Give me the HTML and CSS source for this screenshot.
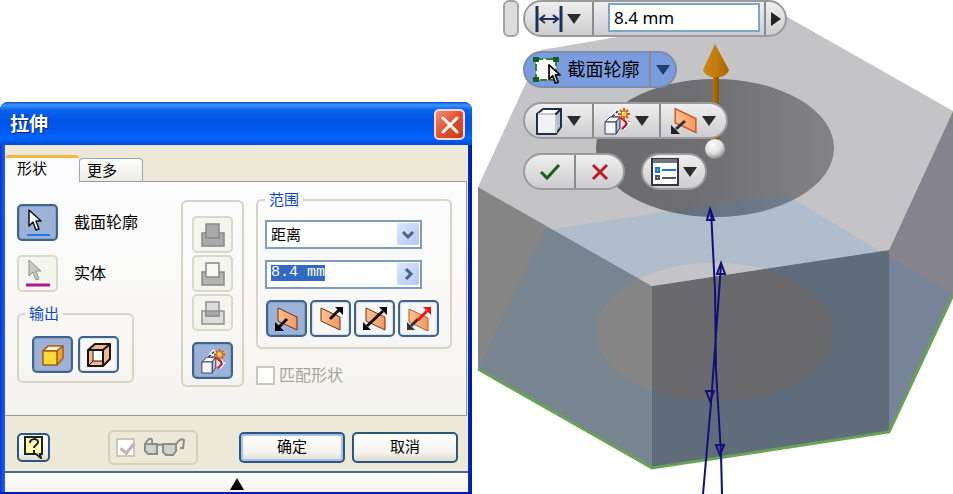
FILE: index.html
```html
<!DOCTYPE html>
<html lang="zh-CN">
<head>
    <meta charset="UTF-8">
    <meta name="viewport" content="width=device-width, initial-scale=1.0">
    <title>拉伸</title>
    <link rel="stylesheet" href="styles.css">
</head>
<body>
    <!-- shared icons -->
    <svg class="defs" width="0" height="0" aria-hidden="true">
        <defs>
            <linearGradient id="shaft" x1="0" x2="1"><stop offset="0" stop-color="#b87000"/><stop offset="1" stop-color="#8c5400"/></linearGradient>
            <linearGradient id="plane-fill" x1="0" x2="1"><stop offset="0" stop-color="#ffc08c"/><stop offset="1" stop-color="#f09a62"/></linearGradient>
            <symbol id="cursor" viewBox="0 0 14 22">
                <path d="M1 1v16l4-4 3 8 3-1-3-8h5z" stroke-linejoin="round"/>
            </symbol>
            <symbol id="plane" viewBox="0 0 24 26">
                <path d="M3 3l19 9v13L3 16z" fill="url(#plane-fill)"/>
            </symbol>
            <symbol id="new-solid" viewBox="0 0 28 28">
                <path d="M9 11l7-8M20 21l6-7" stroke="#fff" stroke-width="5"/>
                <path d="M8 11l7-7M21 20l5-6" stroke="#2b3f9a" stroke-width="2" fill="none" stroke-dasharray="5 2"/>
                <path d="M12 10l6 1 5 4v3l-4 4" fill="#f7dcdc" stroke="#b01830" stroke-width="2"/>
                <path d="M2 15l5-5h10l-4 5z" fill="#fff" stroke="#333a5c"/>
                <path d="M13 15l4-5v11l-4 6z" fill="#b8bcc8" stroke="#333a5c"/>
                <path d="M2 15h11v12H2z" fill="#f4f4f6" stroke="#333a5c"/>
                <path d="M21 1v12M15 7h12M17 3l8 8M25 3l-8 8" stroke="#d85a00" stroke-width="2"/>
                <circle cx="21" cy="7" r="3" fill="#ffd46a" stroke="#e06a00"/>
            </symbol>
        </defs>
    </svg>

    <section class="dialog" aria-label="拉伸">
        <header class="title-bar">
            <h1>拉伸</h1>
            <button type="button" class="close" aria-label="关闭">
                <svg width="18" height="18" viewBox="0 0 18 18"><path d="M2 2l14 14M16 2L2 16" stroke="#fff" stroke-width="3" stroke-linecap="round"/></svg>
            </button>
        </header>

        <div class="dialog-body">
            <div class="tabs" role="tablist">
                <button type="button" role="tab" class="tab active" aria-selected="true">形状</button>
                <button type="button" role="tab" class="tab" aria-selected="false">更多</button>
            </div>

            <div class="panel" role="tabpanel">
                <div class="selection">
                    <div class="field">
                        <button type="button" id="profile" class="tool pressed">
                            <svg width="30" height="30" viewBox="0 0 30 30"><use href="#cursor" x="5" y="1" width="14" height="22" fill="#fff" stroke="#111" stroke-width="1.5"/><path d="M4 27h23" stroke="#1c7fe0" stroke-width="2"/></svg>
                        </button>
                        <label for="profile">截面轮廓</label>
                    </div>
                    <div class="field">
                        <button type="button" id="solid" class="tool disabled">
                            <svg width="30" height="30" viewBox="0 0 30 30"><use href="#cursor" x="5" y="0" width="14" height="22" fill="#c8c8c2" stroke="#909090"/><path d="M3 26h24" stroke="#b01a8c" stroke-width="3"/></svg>
                        </button>
                        <label for="solid">实体</label>
                    </div>
                    <fieldset class="output">
                        <legend>输出</legend>
                        <button type="button" class="tool pressed" aria-label="实体输出">
                            <svg width="26" height="24" viewBox="0 0 26 24" stroke="#a85a10" stroke-width="1.5" stroke-linejoin="round"><path d="M3 8l5-5h15l-6 5z" fill="#fff4d0"/><path d="M17 8l6-5v12l-6 7z" fill="#e8a828"/><path d="M3 8h14v14H3z" fill="#ffd83c"/></svg>
                        </button>
                        <button type="button" class="tool" aria-label="曲面输出">
                            <svg width="26" height="26" viewBox="0 0 26 26" stroke="#1c1410" stroke-width="2" stroke-linejoin="round"><path d="M2 8l7-6h15v15l-7 7H2z" fill="#f0b890"/><path d="M7 8h10v11H7z" fill="#fff" stroke="none"/><path d="M2 8h15v16M17 8l7-6" fill="none"/><path d="M2 24l5-5h10M7 8v11" fill="none" stroke-width="1"/></svg>
                        </button>
                    </fieldset>
                </div>

                <div class="operations">
                    <button type="button" class="tool disabled" aria-label="求并">
                        <svg width="26" height="26" viewBox="0 0 26 26" fill="#aaa" stroke="#888" stroke-width="1.5"><path d="M2 11h22v13H2z"/><path d="M6 2h13v14H6z"/></svg>
                    </button>
                    <button type="button" class="tool disabled" aria-label="求差">
                        <svg width="26" height="26" viewBox="0 0 26 26" fill="#b4b4b4" stroke="#888" stroke-width="1.5"><path d="M2 11h22v13H2z"/><path d="M6 2h13v14H6z" fill="#f8f8f4"/></svg>
                    </button>
                    <button type="button" class="tool disabled" aria-label="求交">
                        <svg width="26" height="26" viewBox="0 0 26 26" fill="#dcdcdc" stroke="#909090" stroke-width="1.5"><path d="M2 11h22v13H2z"/><path d="M6 2h13v14H6z"/><path d="M6 11h13v5H6z" fill="#aaa"/></svg>
                    </button>
                    <button type="button" class="tool pressed" aria-label="新建实体">
                        <svg width="26" height="26"><use href="#new-solid"/></svg>
                    </button>
                </div>

                <div class="settings">
                    <fieldset class="extents">
                        <legend>范围</legend>
                        <div class="combo">
                            <select aria-label="范围"><option>距离</option></select>
                            <svg class="combo-arrow" width="22" height="22" viewBox="0 0 22 22"><path d="M6 9l5 5 5-5" fill="none" stroke="#4d6185" stroke-width="3"/></svg>
                        </div>
                        <div class="combo">
                            <span class="value"><input type="text" class="distance" value="8.4 mm" aria-label="距离"></span>
                            <button type="button" class="combo-arrow" aria-label="更多值"><svg width="22" height="22" viewBox="0 0 22 22"><path d="M9 6l5 5-5 5" fill="none" stroke="#4d6185" stroke-width="3"/></svg></button>
                        </div>
                        <div class="directions">
                            <button type="button" class="tool pressed" aria-label="方向 1">
                                <svg width="26" height="28" viewBox="0 0 26 28"><use href="#plane" x="1" y="0" width="24" height="26" stroke="#6b3010"/><path d="M13 14l-8 8" stroke="#111" stroke-width="3"/><path d="M1 26v-9l9 9z"/></svg>
                            </button>
                            <button type="button" class="tool" aria-label="方向 2">
                                <svg width="26" height="28" viewBox="0 0 26 28"><use href="#plane" x="0" y="0" width="24" height="26" stroke="#6b3010"/><path d="M12 14l9-9" stroke="#111" stroke-width="3"/><path d="M25 2v8l-8-8z"/></svg>
                            </button>
                            <button type="button" class="tool" aria-label="对称">
                                <svg width="26" height="28" viewBox="0 0 26 28"><use href="#plane" x="1" y="0" width="24" height="26" stroke="#6b3010"/><path d="M5 21L21 6" stroke="#111" stroke-width="3"/><path d="M25 2v8l-8-8zM1 25v-8l8 8z"/></svg>
                            </button>
                            <button type="button" class="tool" aria-label="不对称">
                                <svg width="26" height="28" viewBox="0 0 26 28"><use href="#plane" x="0" y="1" width="24" height="26" stroke="#b05a20"/><path d="M5 21l7-7" stroke="#333" stroke-width="3"/><path d="M1 25v-8l8 8z" fill="#333"/><path d="M12 15l9-9" stroke="#f01414" stroke-width="3"/><path d="M25 2v8l-8-8z" fill="#f01414"/></svg>
                            </button>
                        </div>
                    </fieldset>
                    <div class="match">
                        <input type="checkbox" id="match" disabled>
                        <label for="match">匹配形状</label>
                    </div>
                </div>
            </div>

            <footer class="actions">
                <button type="button" class="push help" aria-label="帮助">
                    <svg width="22" height="24" viewBox="0 0 22 24"><path d="M2 2h17v17h-2l1 4-5-4H2z" fill="#ffffa8" stroke="#222" stroke-width="2"/><path d="M7 8c0-5 8-5 8-1 0 3-4 3-4 6M11 15v3" fill="none" stroke="#181850" stroke-width="2"/></svg>
                </button>
                <label class="preview">
                    <input type="checkbox" checked disabled aria-label="预览">
                    <svg width="42" height="20" viewBox="0 0 42 20" fill="#d0d0cc" stroke="#8c8c88" stroke-width="2"><path d="M2 7h12v10H5l-3-3zM20 7h13v7l-3 4h-7l-3-3z"/><path d="M14 9c2-2 4-2 6 0M2 8c1-5 6-8 7-5v3M33 8c2-5 6-7 8-5l-1 8h-3" fill="none"/></svg>
                </label>
                <button type="button" class="push default">确定</button>
                <button type="button" class="push">取消</button>
            </footer>
            <button type="button" class="collapse" aria-label="收起">
                <svg width="14" height="12" viewBox="0 0 14 12"><path d="M7 0l7 12H0z"/></svg>
            </button>
        </div>
    </section>

    <main class="viewport">
        <svg class="scene" viewBox="472 0 481 494" role="img" aria-label="六角螺母">
            <defs>
                <linearGradient id="bore" x1="0" x2="1">
                    <stop offset="0" stop-color="#6c6c6e"/>
                    <stop offset=".4" stop-color="#6e6e70"/>
                    <stop offset="1" stop-color="#838387"/>
                </linearGradient>
                <radialGradient id="ball" cx=".4" cy=".3" r=".7">
                    <stop offset="0" stop-color="#fff"/>
                    <stop offset=".6" stop-color="#e0e0e0"/>
                    <stop offset="1" stop-color="#8c8c8c"/>
                </radialGradient>
                <linearGradient id="cone" x1="0" x2="1">
                    <stop offset="0" stop-color="#d08414"/>
                    <stop offset=".5" stop-color="#c27a0c"/>
                    <stop offset="1" stop-color="#a86604"/>
                </linearGradient>
            </defs>
            <!-- faces -->
            <path d="M478 187l63-137 234-40 178 101-64 139-237 36z" fill="#c4c4c6"/>
            <path d="M478 187l174 99v182l-174-99z" fill="#858585"/>
            <path d="M652 286l237-36v182l-237 36z" fill="#6a6a6c"/>
            <path d="M889 250l64-139v184l-64 137z" fill="#85848c"/>
            <ellipse cx="715" cy="148" rx="119" ry="69" fill="url(#bore)"/>
            <!-- base profile seen through the solid -->
            <path d="M478 369l67-139 240-36 168 101-64 137-237 36zM596 332a118 69 0 0 0 237 0a118 69 0 0 0-237 0z" fill="rgba(0,140,255,.1)" fill-rule="evenodd"/>
            <path d="M478 369l174 99 237-36 64-137" fill="none" stroke="#68a355" stroke-width="3"/>
            <!-- axes -->
            <g fill="none" stroke="#10107c" stroke-width="2">
                <path d="M711 210l4 80 1 80 5 84 1 40M721 265l-5 70-5 68-8 91"/>
                <path d="M710 209l-3 11h7zM721 263l-4 11h8zM710 401l-4-10h8zM720 455l-4-10h8z"/>
            </g>
            <!-- drag handle -->
            <path d="M713 74h6v70h-6z" fill="url(#shaft)"/>
            <path d="M715 44l14 26c-3 10-23 10-26 0z" fill="url(#cone)"/>
            <circle cx="715" cy="149" r="10" fill="url(#ball)"/>
        </svg>

        <div class="mini-toolbar">
            <div class="row first">
                <span class="grip"></span>
                <div class="capsule value-capsule">
                    <button type="button" class="segment" aria-label="距离类型">
                        <svg width="28" height="26" viewBox="0 0 28 26" stroke="#1c3058"><path d="M2 0v26M26 0v26" stroke-width="3"/><path d="M6 13h16M10 9l-5 4 5 4M18 9l5 4-5 4" stroke-width="2" fill="none"/></svg>
                        <span class="caret"></span>
                    </button>
                    <div class="value-slot"><input type="text" value="8.4 mm" aria-label="距离值"></div>
                    <button type="button" class="next" aria-label="展开"><span class="caret-right"></span></button>
                </div>
            </div>
            <div class="row">
                <div class="capsule selected">
                    <button type="button" class="segment profile">
                        <svg width="28" height="28" viewBox="0 0 28 28"><path d="M3 3h20v21H3z" fill="#fff" stroke="#2c8038" stroke-width="2" stroke-dasharray="7 3"/><path d="M0 1h6v5H0zM20 1h6v5h-6zM0 21h6v5H0z" fill="#106020"/><use href="#cursor" x="15" y="8" width="13" height="20" fill="#fff" stroke="#111" stroke-width="2"/></svg>
                        截面轮廓
                    </button>
                    <button type="button" class="drop" aria-label="截面轮廓选项"><span class="caret"></span></button>
                </div>
            </div>
            <div class="row">
                <div class="capsule">
                    <button type="button" class="segment" aria-label="实体">
                        <svg width="28" height="28" viewBox="0 0 28 28" stroke="#20304f" stroke-width="2" stroke-linejoin="round"><path d="M2 7l6-5h18l-5 5z" fill="#fff"/><path d="M21 7l5-5v18l-5 7z" fill="#b8bcc4"/><path d="M2 7h19v20H2z" fill="#f2f2f4"/><path d="M3 7h17M21 8v18" stroke="#c4c8d0"/></svg>
                        <span class="caret"></span>
                    </button>
                    <button type="button" class="segment" aria-label="新建实体">
                        <svg width="28" height="28"><use href="#new-solid"/></svg>
                        <span class="caret"></span>
                    </button>
                    <button type="button" class="segment" aria-label="方向">
                        <svg width="28" height="28" viewBox="0 0 28 28"><use href="#plane" x="2" y="-2" width="26" height="29" stroke="#c8602c" stroke-width="1.5"/><path d="M15 14l-9 8" stroke="#333" stroke-width="3"/><path d="M1 27v-9l9 9z" fill="#222"/></svg>
                        <span class="caret"></span>
                    </button>
                </div>
            </div>
            <div class="row">
                <div class="capsule">
                    <button type="button" class="answer" aria-label="确定">
                        <svg width="22" height="18" viewBox="0 0 22 18"><path d="M2 9l6 6L20 2" fill="none" stroke="#15621c" stroke-width="3"/></svg>
                    </button>
                    <button type="button" class="answer" aria-label="取消">
                        <svg width="18" height="18" viewBox="0 0 18 18"><path d="M2 2l14 14M16 2L2 16" stroke="#b81c24" stroke-width="3"/></svg>
                    </button>
                </div>
                <div class="capsule">
                    <button type="button" class="segment options" aria-label="选项">
                        <svg width="28" height="28" viewBox="0 0 28 28"><path d="M1 1h26v26H1z" fill="#fff" stroke="#303540" stroke-width="2"/><path d="M2 3h24" stroke="#70747c" stroke-width="4"/><path d="M11 12h14" stroke="#1c78c8" stroke-width="2"/><path d="M11 20h14" stroke="#555" stroke-width="2"/><path d="M5 10h3v4H5z" fill="#8cc4f4" stroke="#1c78c8" stroke-width="2"/><path d="M5 18h3v3H5z" fill="#fff" stroke="#555" stroke-width="2"/></svg>
                        <span class="caret"></span>
                    </button>
                </div>
            </div>
        </div>
    </main>
</body>
</html>
```
FILE: styles.css
```css
* {
    box-sizing: border-box;
}
body {
    margin: 0;
    display: grid;
    grid-template-columns: 472fr 481fr;
    align-items: start;
    background-color: #fff;
    color: #000;
    font-family: "Liberation Sans", "Noto Sans CJK SC", sans-serif;
    font-size: 16px;
    line-height: 16px;
}
button, input, select {
    font: inherit;
    color: inherit;
    margin: 0;
    padding: 0;
}
button {
    display: flex;
    align-items: center;
    justify-content: center;
    border: 0;
    background: none;
}
svg {
    display: block;
    flex: none;
}
.defs {
    position: absolute;
}

/* dialog */
.dialog {
    margin-top: 102px;
    background: linear-gradient(to right, #0831d9, #1660e8 4px, #1660e8 50%, #0831c0 calc(100% - 4px), #001a90);
    border-bottom: 4px solid #0019a0;
    border-radius: 8px 8px 0 0;
}
.title-bar {
    display: flex;
    align-items: center;
    justify-content: space-between;
    height: 43px;
    padding: 2px 7px 0 10px;
    border-radius: 8px 8px 0 0;
    background: linear-gradient(#0a50c8, #3c96ff 3px, #0a62ee 8px, #0054e3 18px, #0058f0 28px, #0066ff 36px, #0048d0);
}
.title-bar h1 {
    margin: 0;
    font-size: 19px;
    line-height: 24px;
    color: #fff;
    text-shadow: 1px 1px 1px #0a1e6e;
}
.close {
    width: 31px;
    height: 31px;
    border: 2px solid #f4dcdc;
    border-radius: 5px;
    background: linear-gradient(135deg, #f09078, #e0502c 50%, #c83c14);
}
.dialog-body {
    margin: 0 4px 0 5px;
    background-color: #ece9d8;
}
.tabs {
    display: flex;
    align-items: flex-end;
    height: 36px;
}
.tab {
    width: 64px;
    height: 23px;
    padding: 2px 18px 0 0;
    border: 1px solid #91a7b4;
    border-bottom: 0;
    border-radius: 4px 4px 0 0;
    background: linear-gradient(#fff, #ecebe6);
    font-size: 15px;
}
.tab.active {
    width: 74px;
    height: 27px;
    padding: 0 20px 2px 0;
    margin-bottom: -1px;
    z-index: 1;
    border: 0;
    border-top: 3px solid #f4b440;
    background: #fcfcfe;
}
.panel {
    display: grid;
    grid-template-columns: 1fr 63px 196px;
    gap: 12px;
    align-items: start;
    margin-right: 1px;
    padding: 10px 14px 28px 12px;
    border: 1px solid #919b9c;
    border-left: 0;
    background: linear-gradient(#fcfcfe, #f4f3ee);
}
fieldset {
    min-width: 0;
    margin: 0;
    border: 2px solid #d5d4c6;
    border-radius: 6px;
}
legend {
    padding: 0 4px;
    font-size: 15px;
    color: #0a46d0;
}

.tool {
    width: 41px;
    height: 37px;
    border: 2px solid #3f648c;
    border-radius: 5px;
    background-color: #f7f7f5;
    box-shadow: inset 0 0 1px 1px #d8dde4;
}
.tool.pressed {
    background-color: #9db2d6;
    box-shadow: inset 0 0 1px 1px #86a0c8;
}
.tool.disabled {
    border-color: #dad8cb;
    background-color: #f5f5ef;
    box-shadow: none;
}
.selection {
    display: flex;
    flex-direction: column;
    gap: 14px;
    margin-top: 12px;
}
.field {
    display: flex;
    align-items: center;
    gap: 16px;
}
.output {
    display: flex;
    gap: 5px;
    width: 117px;
    padding: 14px 0 8px 13px;
}
.output legend {
    margin-left: -7px;
}
.operations {
    display: flex;
    flex-direction: column;
    align-items: center;
    gap: 2px;
    margin-top: 8px;
    padding: 14px 0 6px;
    border: 2px solid #d5d4c6;
    border-radius: 6px;
}
.operations .pressed {
    margin-top: 9px;
}
.extents {
    display: flex;
    flex-direction: column;
    gap: 11px;
    padding: 12px 28px 10px 7px;
}
.combo {
    position: relative;
    height: 29px;
    border: 2px solid #7f9db9;
    background-color: #fff;
}
.combo select {
    appearance: none;
    width: 100%;
    height: 25px;
    padding-left: 4px;
    border: 0;
    background: none;
    font-size: 15px;
}
.combo-arrow {
    position: absolute;
    top: 1px;
    right: 1px;
    border-radius: 2px;
    background: linear-gradient(135deg, #dce6fe, #b4c8f4);
    pointer-events: none;
}
.value {
    display: block;
    padding: 3px 0 0 4px;
}
.distance {
    display: block;
    width: 54px;
    height: 16px;
    border: 0;
    background-color: #316ac5;
    color: #fff;
    font-family: "Liberation Mono", monospace;
    font-size: 15px;
    line-height: 16px;
}
.directions {
    display: flex;
    gap: 3px;
    padding-left: 1px;
}
.directions .tool {
    flex: none;
}
.match {
    display: flex;
    align-items: center;
    gap: 4px;
    margin-top: 17px;
    color: #a5a498;
}
input[type="checkbox"] {
    appearance: none;
    width: 19px;
    height: 19px;
    border: 2px solid #cac8bb;
    background-color: #fff;
}
input[type="checkbox"]:checked::after {
    content: "";
    display: block;
    width: 6px;
    height: 11px;
    margin: 0 0 0 5px;
    border: solid #b8b6aa;
    border-width: 0 3px 3px 0;
    transform: rotate(40deg);
}

.actions {
    display: flex;
    align-items: center;
    height: 55px;
    padding: 7px 10px 0 12px;
    gap: 7px;
}
.push {
    width: 106px;
    height: 31px;
    border: 2px solid #2c5680;
    border-radius: 5px;
    background: linear-gradient(#fff, #f3f2ec 70%, #dcd8cc);
    font-size: 15px;
}
.push.default {
    box-shadow: inset 0 0 0 2px #a4c2f2;
}
.push.help {
    width: 33px;
    height: 29px;
}
.preview {
    display: flex;
    align-items: center;
    gap: 8px;
    width: 90px;
    height: 35px;
    margin: 0 34px 0 auto;
    padding-left: 6px;
    border: 2px solid #d3d0c0;
    border-radius: 6px;
}
.collapse {
    width: 100%;
    height: 21px;
    padding-top: 3px;
    border-top: 2px solid #4a6c94;
    background: linear-gradient(#fff, #f3f2ee);
}

/* model view */
.viewport {
    position: relative;
}
.scene {
    width: 100%;
    height: auto;
}
.mini-toolbar {
    position: absolute;
    top: 0;
    left: 31px;
    display: flex;
    flex-direction: column;
    gap: 14px;
}
.row {
    display: flex;
    gap: 16px;
    padding-left: 20px;
}
.row.first {
    gap: 4px;
    padding-left: 0;
}
.grip {
    width: 16px;
    border: 2px solid #a4a4a4;
    border-radius: 6px;
    background-color: #dcdcdc;
}
.capsule {
    display: flex;
    height: 37px;
    overflow: hidden;
    border: 2px solid #9b9b9b;
    border-radius: 19px;
    background: linear-gradient(#efefef, #cdcdcf);
}
.capsule.selected {
    border-color: #7c8cac;
    background: #7b9de0;
}
.segment {
    gap: 4px;
    width: 67px;
    padding-right: 2px;
}
.capsule > * + * {
    border-left: 2px solid #8a8a8a;
}
.segment.profile {
    width: 124px;
    gap: 7px;
    font-size: 18px;
    white-space: nowrap;
}
.segment.options {
    width: 62px;
    padding: 0;
}
.drop {
    width: 26px;
}
.caret {
    border: solid transparent;
    border-width: 10px 7px 0;
    border-top-color: #2c2c2c;
}
.selected .caret {
    border-top-color: #263c70;
}
.caret-right {
    border: solid transparent;
    border-width: 7px 0 7px 10px;
    border-left-color: #222;
}
.value-slot {
    padding: 1px 4px 0 14px;
}
.value-slot input {
    width: 152px;
    height: 29px;
    padding-left: 4px;
    border: 2px solid #7ca6c8;
    background-color: #fff;
    font-family: "Noto Sans", sans-serif;
    font-size: 17px;
}
.next {
    width: 21px;
}
.answer {
    width: 49px;
}
```
